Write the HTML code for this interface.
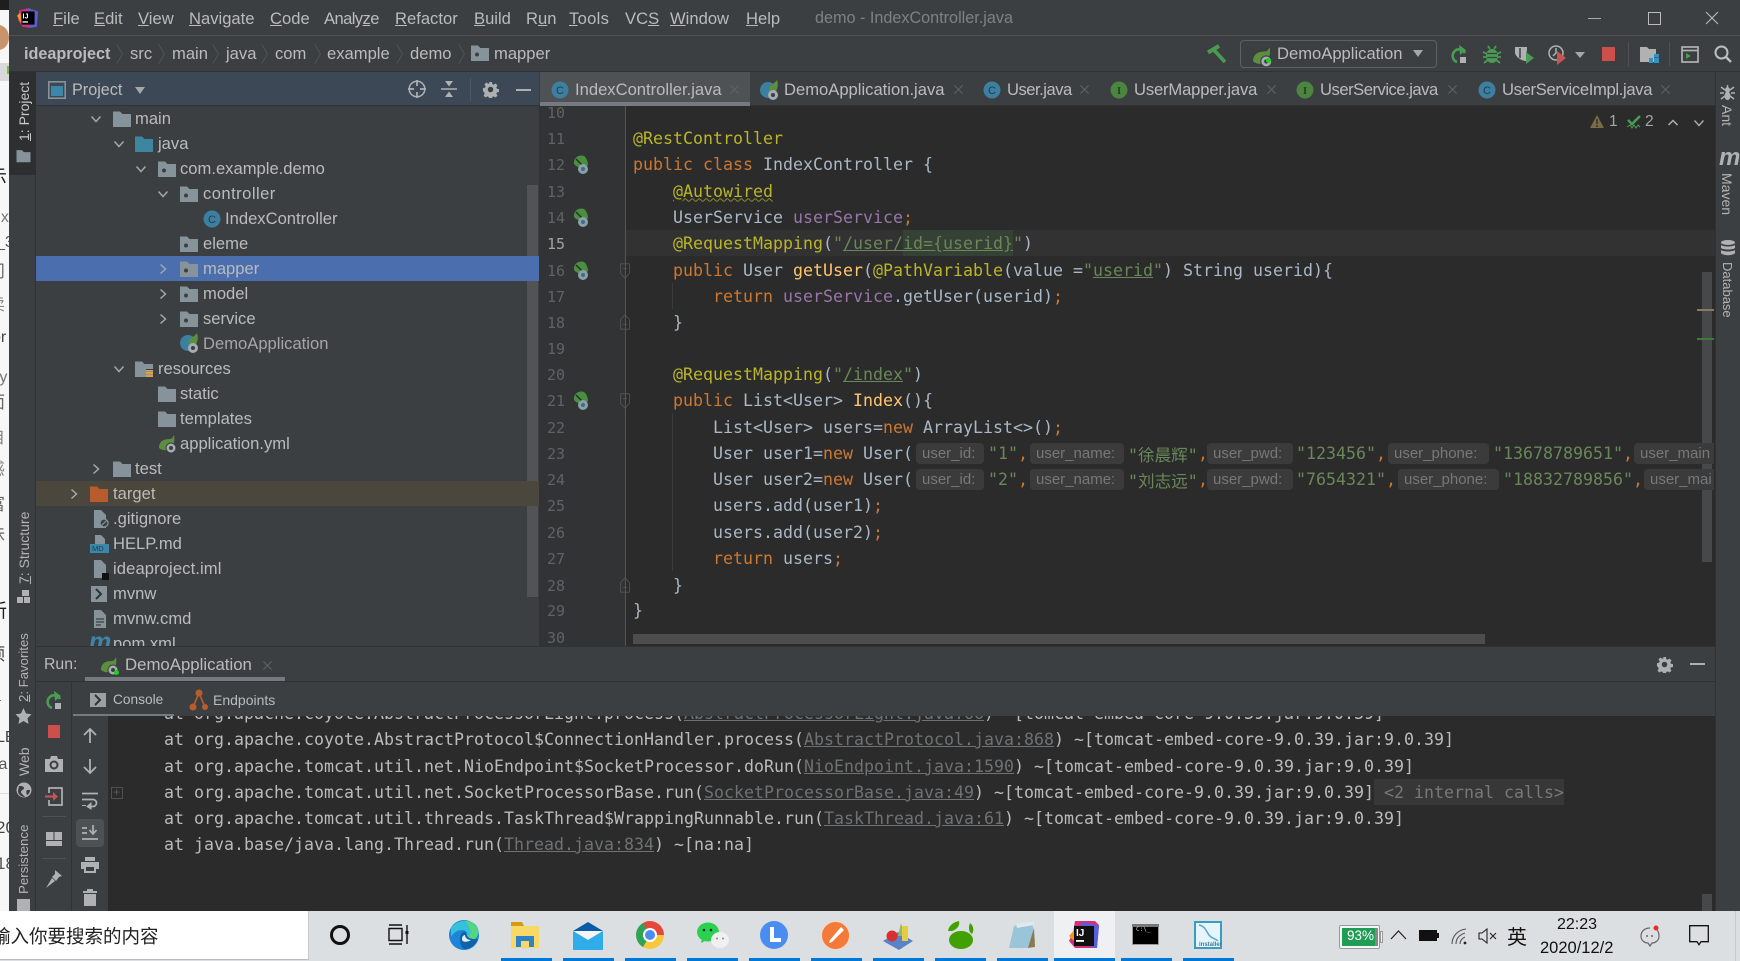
<!DOCTYPE html>
<html lang="en"><head><meta charset="utf-8"><title>demo - IndexController.java</title>
<style>
html,body{margin:0;padding:0;width:1740px;height:961px;overflow:hidden;background:#3c3f41}
body{position:relative;font-family:"Liberation Sans","Noto Sans CJK SC",sans-serif;color:#bbb;font-size:16.6px}
.b{position:absolute}
.t{position:absolute;white-space:pre;line-height:0}
.m{position:absolute;white-space:pre;line-height:0;font-family:"DejaVu Sans Mono","Noto Sans CJK SC",monospace;font-size:16.61px;color:#a9b7c6}
.n{position:absolute;white-space:pre;line-height:0;font-family:"DejaVu Sans Mono",monospace;font-size:15px;color:#606366;left:547px}
svg.i{position:absolute;overflow:visible}
.a{color:#bbb529}.k{color:#cc7832}.f{color:#9876aa}.y{color:#ffc66d}.s{color:#6a8759}
.u{text-decoration:underline}
.h{position:absolute;background:#3b3b3b;border-radius:4px;height:21px;margin-top:-1px}
.ht{position:absolute;white-space:pre;line-height:0;color:#787878;font-size:15px}
.v{position:absolute;white-space:pre;line-height:0;font-size:14px;color:#b4b4b4;transform-origin:0 0}
.l{color:#6f7173;text-decoration:underline}
.mi u{text-decoration:underline}
.tb{position:absolute;top:958px;height:3px;background:#0078d7}
.tree{color:#bbb}
.cjk{font-size:16.6px;font-family:"Noto Sans CJK SC",sans-serif}
</style></head><body>
<svg width="0" height="0" style="position:absolute"><defs>
<symbol id="fo" viewBox="0 0 18 18"><path d="M0 1.5h7l2.500 2.500H18v13H0z" fill="#87939a"/></symbol>
<symbol id="pk" viewBox="0 0 18 18"><path d="M0 1.500h7l2.500 2.500H18v13H0z" fill="#87939a"/><circle cx="6" cy="10.500" r="2" fill="#3c3f41"/></symbol>
<symbol id="bl" viewBox="0 0 18 18"><path d="M0 1.500h7l2.500 2.500H18v13H0z" fill="#3e86a0"/></symbol>
<symbol id="re" viewBox="0 0 18 18"><path d="M0 1.500h7l2.500 2.500H18v13H0z" fill="#87939a"/><path d="M11 9h7v2h-7zm0 3h7v2h-7zm0 3h7v2h-7z" fill="#d9a343"/><path d="M11 9h7v1h-7z" fill="#3c3f41"/></symbol>
<symbol id="cc" viewBox="0 0 18 18"><circle cx="9" cy="9" r="8.500" fill="#3c7f9f"/><text x="9" y="13" text-anchor="middle" font-size="11" font-family="Liberation Sans" fill="#1c3d4f">C</text></symbol>
<symbol id="ii" viewBox="0 0 18 18"><circle cx="9" cy="9" r="8.500" fill="#4b8540"/><text x="9" y="13" text-anchor="middle" font-size="10.500" font-weight="bold" font-family="Liberation Serif" fill="#233f1e">I</text></symbol>
<symbol id="sp" viewBox="0 0 20 20"><path d="M1 14C1 7 6 5 12 5c2 0 3-2 4-4 1 5 0 10-3 13-4 3-8 3-12 0z" fill="#5b8f3d"/><circle cx="13" cy="14" r="5.500" fill="#3c3f41"/><circle cx="13" cy="14" r="4.500" fill="#a5adb2"/><circle cx="13" cy="14" r="2" fill="#3c3f41"/></symbol>
<symbol id="dm" viewBox="0 0 20 20"><circle cx="8" cy="10" r="8" fill="#3c7f9f"/><path d="M9 8c1-3 5-4 8-8 2 6 0 12-4 14-3 0-5-2-4-6z" fill="#5b8f3d"/><circle cx="13" cy="15" r="5" fill="#a5adb2"/><circle cx="13" cy="15" r="2" fill="#3c3f41"/></symbol>
<symbol id="gu" viewBox="0 0 16 20"><path d="M1 9C0 3 6-1 11 1c3 2 4 7 4 9-3 3-10 4-14-1z" fill="#4a8f3f"/><path d="M3 4l9 9" stroke="#2b2b2b" stroke-width="1.500"/><circle cx="10" cy="14" r="5" fill="#8ca0aa"/><circle cx="10" cy="14" r="2" fill="#3c6e86"/></symbol>
<symbol id="fd" viewBox="0 0 12 20"><path d="M.5 1h11v12l-5.500 6-5.500-6z" fill="none" stroke="#565656"/><path d="M3.500 7h5" stroke="#565656"/></symbol>
<symbol id="fu" viewBox="0 0 12 20"><path d="M.5 19h11V7L6 1 .5 7z" fill="none" stroke="#565656"/><path d="M3.500 13h5" stroke="#565656"/></symbol>
<symbol id="ch" viewBox="0 0 12 12"><path d="M1.500 3.500L6 8.500l4.500-5" fill="none" stroke="#a5a7a9" stroke-width="1.500"/></symbol>
<symbol id="cr" viewBox="0 0 12 12"><path d="M3.500 1.500L8.500 6l-5 4.500" fill="none" stroke="#a5a7a9" stroke-width="1.500"/></symbol>
<symbol id="br" viewBox="0 0 10 26"><path d="M1 1l7 12-7 12" fill="none" stroke="#55585a" stroke-width="1"/></symbol>
<symbol id="x" viewBox="0 0 12 12"><path d="M1.500 1.500l9 9m0-9l-9 9" stroke="#5f6163" stroke-width="1.200"/></symbol>
<symbol id="gear" viewBox="0 0 16 16"><path d="M6.500 0h3l.4 2.300 1.500.7 2-1.300 2 2.100-1.300 2 .7 1.400 2.200.4v3l-2.200.400-.7 1.500 1.300 2-2 2-2-1.300-1.500.700-.4 2.200h-3l-.4-2.200-1.500-.700-2 1.300-2-2 1.300-2-.7-1.500L0 9.500v-3l2.200-.4.7-1.400-1.300-2 2-2.100 2 1.300 1.500-.7z" fill="#adb0b2" transform="scale(.89) translate(1 1)"/><circle cx="8" cy="8" r="2.600" fill="#3c3f41"/></symbol>
<symbol id="file" viewBox="0 0 14 20"><path d="M1 1h7l5 5v13H1z" fill="#87939a"/></symbol>
</defs></svg>

<!-- left desktop sliver -->
<div class="b" style="left:0;top:0;width:9px;height:911px;background:#f7f7f7;overflow:hidden">
<div class="b" style="left:0;top:0;width:9px;height:10px;background:#1e1e1e"></div>
<div class="b" style="left:-12px;top:25px;width:21px;height:25px;border-radius:50%;background:#c8946c"></div>
<div class="b" style="left:0;top:63px;width:9px;height:18px;background:#d9d9d9"></div>
<div class="b" style="left:7px;top:66px;width:2px;height:8px;background:#7dbb55"></div>
<div class="t" style="left:-12px;top:178px;color:#222;font-size:19px">示</div>
<div class="t" style="left:-8px;top:218px;color:#777;font-size:16px">ux</div>
<div class="t" style="left:-4px;top:243px;color:#555;font-size:16px">_3</div>
<div class="t" style="left:-12px;top:272px;color:#666;font-size:17px">问</div>
<div class="t" style="left:-12px;top:305px;color:#888;font-size:17px">卖</div>
<div class="t" style="left:-8px;top:338px;color:#444;font-size:16px">or</div>
<div class="t" style="left:-6px;top:378px;color:#777;font-size:16px">-y</div>
<div class="t" style="left:-12px;top:403px;color:#666;font-size:17px">面</div>
<div class="t" style="left:-12px;top:438px;color:#888;font-size:17px">自</div>
<div class="t" style="left:-12px;top:470px;color:#888;font-size:17px">感</div>
<div class="t" style="left:-12px;top:505px;color:#666;font-size:17px">富</div>
<div class="t" style="left:-12px;top:535px;color:#666;font-size:17px">味</div>
<div class="t" style="left:-12px;top:612px;color:#222;font-size:19px">新</div>
<div class="t" style="left:-12px;top:655px;color:#444;font-size:17px">顶</div>
<div class="t" style="left:-8px;top:697px;color:#444;font-size:16px">a</div>
<div class="t" style="left:-4px;top:738px;color:#444;font-size:16px">LE</div>
<div class="t" style="left:-6px;top:765px;color:#555;font-size:16px">ta</div>
<div class="b" style="left:0;top:793px;width:9px;height:1px;background:#ddd"></div>
<div class="t" style="left:-4px;top:828px;color:#444;font-size:17px">20</div>
<div class="t" style="left:-4px;top:864px;color:#555;font-size:17px">18</div>
</div>

<!-- title bar -->
<div class="b" style="left:9px;top:0;width:1731px;height:35px;background:#3c3f41"></div>
<div class="b" style="left:9px;top:35px;width:1731px;height:1px;background:#515151"></div>
<svg class="i" style="left:17px;top:7px" width="22" height="22" viewBox="0 0 20 20"><path d="M2 3l9-2 3 2 5 2-1 12-6 2-7-1-4-6z" fill="#d4317c"/><path d="M10 1l9 3-1 14-6 1z" fill="#5a5fd6"/><path d="M0 8l3-3 2 12z" fill="#f49725"/><rect x="4" y="4" width="12" height="12" fill="#000"/><text x="5" y="10.500" font-size="6.500" font-weight="bold" font-family="Liberation Sans" fill="#fff">IJ</text><rect x="5" y="13" width="5" height="1.200" fill="#fff"/></svg>
<div class="mi">
<div class="t" style="left:53px;top:19px"><u>F</u>ile</div>
<div class="t" style="left:94px;top:19px"><u>E</u>dit</div>
<div class="t" style="left:138px;top:19px"><u>V</u>iew</div>
<div class="t" style="left:189px;top:19px"><u>N</u>avigate</div>
<div class="t" style="left:270px;top:19px"><u>C</u>ode</div>
<div class="t" style="left:324px;top:19px;letter-spacing:-.6px">Analy<u>z</u>e</div>
<div class="t" style="left:395px;top:19px"><u>R</u>efactor</div>
<div class="t" style="left:474px;top:19px"><u>B</u>uild</div>
<div class="t" style="left:526px;top:19px">R<u>u</u>n</div>
<div class="t" style="left:569px;top:19px;letter-spacing:.3px"><u>T</u>ools</div>
<div class="t" style="left:625px;top:19px">VC<u>S</u></div>
<div class="t" style="left:670px;top:19px"><u>W</u>indow</div>
<div class="t" style="left:746px;top:19px"><u>H</u>elp</div>
</div>
<div class="t" style="left:815px;top:18px;color:#808080;font-size:16.2px">demo - IndexController.java</div>
<div class="b" style="left:1588px;top:18px;width:13px;height:1px;background:#aaa"></div>
<div class="b" style="left:1648px;top:12px;width:11px;height:11px;border:1px solid #bbb"></div>
<svg class="i" style="left:1705px;top:11px" width="14" height="14" viewBox="0 0 14 14"><path d="M1 1l12 12m0-12L1 13" stroke="#bbb" stroke-width="1.100"/></svg>

<!-- nav bar -->
<div class="b" style="left:9px;top:71px;width:1731px;height:1px;background:#323232"></div>
<div class="t" style="left:24px;top:54px;font-weight:bold;font-size:16.2px">ideaproject</div>
<svg class="i" style="left:116px;top:41px" width="8" height="26"><use href="#br"/></svg>
<div class="t" style="left:130px;top:54px">src</div>
<svg class="i" style="left:158px;top:41px" width="8" height="26"><use href="#br"/></svg>
<div class="t" style="left:172px;top:54px">main</div>
<svg class="i" style="left:212px;top:41px" width="8" height="26"><use href="#br"/></svg>
<div class="t" style="left:226px;top:54px">java</div>
<svg class="i" style="left:261px;top:41px" width="8" height="26"><use href="#br"/></svg>
<div class="t" style="left:275px;top:54px">com</div>
<svg class="i" style="left:314px;top:41px" width="8" height="26"><use href="#br"/></svg>
<div class="t" style="left:327px;top:54px">example</div>
<svg class="i" style="left:396px;top:41px" width="8" height="26"><use href="#br"/></svg>
<div class="t" style="left:410px;top:54px">demo</div>
<svg class="i" style="left:458px;top:41px" width="8" height="26"><use href="#br"/></svg>
<svg class="i" style="left:471px;top:44px" width="18" height="18"><use href="#pk"/></svg>
<div class="t" style="left:494px;top:54px">mapper</div>

<svg class="i" style="left:1206px;top:45px" width="22" height="19" viewBox="0 0 22 19"><path d="M2 7.500L13 1" fill="none" stroke="#4a9a52" stroke-width="4"/><path d="M8 5l11 12" fill="none" stroke="#4a9a52" stroke-width="3.600"/></svg>
<div class="b" style="left:1240px;top:40px;width:195px;height:26px;border:1px solid #5e6163;border-radius:4px"></div>
<svg class="i" style="left:1252px;top:46px" width="22" height="22"><use href="#sp"/></svg>
<div class="b" style="left:1266px;top:58px;width:5px;height:5px;border-radius:50%;background:#1bd41b"></div>
<div class="t" style="left:1277px;top:54px">DemoApplication</div>
<div class="b" style="left:1413px;top:50px;width:0;height:0;border-left:5.500px solid transparent;border-right:5.500px solid transparent;border-top:7px solid #a5a7a9"></div>
<svg class="i" style="left:1450px;top:45px" width="18" height="20" viewBox="0 0 18 20"><path d="M15 8A6.500 6.500 0 1 0 7 17" fill="none" stroke="#499c54" stroke-width="2.600"/><path d="M9 0l7 5-6 5z" fill="#499c54"/><rect x="10" y="12" width="6" height="6" fill="#afb1b3"/></svg>
<svg class="i" style="left:1483px;top:45px" width="18" height="20" viewBox="0 0 18 20"><ellipse cx="9" cy="11" rx="6" ry="7" fill="#499c54"/><path d="M0 7l4 2M18 7l-4 2M0 12h4M14 12h4M1 18l4-3M17 18l-4-3M5 1l2 3M13 1l-2 3" stroke="#499c54" stroke-width="1.800"/><path d="M4 8.500h10M4 12.500h10" stroke="#3c3f41" stroke-width="1.300"/></svg>
<svg class="i" style="left:1514px;top:45px" width="21" height="20" viewBox="0 0 21 20"><path d="M1 2h12v2l-1 12c-3 0-10-3-11-8z" fill="#afb1b3"/><path d="M6 3v10" stroke="#3c3f41" stroke-width="1.500"/><path d="M12 7l8 6-8 6z" fill="#499c54"/></svg>
<svg class="i" style="left:1548px;top:45px" width="20" height="20" viewBox="0 0 20 20"><circle cx="8" cy="8" r="7" fill="none" stroke="#afb1b3" stroke-width="1.500"/><path d="M8 3v5l-3 3" fill="none" stroke="#afb1b3" stroke-width="1.500"/><path d="M9 6l9 7-9 7z" fill="#c75450"/></svg>
<div class="b" style="left:1575px;top:52px;width:0;height:0;border-left:5px solid transparent;border-right:5px solid transparent;border-top:6px solid #a5a7a9"></div>
<div class="b" style="left:1602px;top:47px;width:13px;height:14px;background:#cd4f4c"></div>
<div class="b" style="left:1628px;top:42px;width:1px;height:24px;background:#515151"></div>
<svg class="i" style="left:1640px;top:46px" width="20" height="18" viewBox="0 0 20 18"><path d="M0 1h7l2 2h7v13H0z" fill="#afb1b3"/><rect x="14" y="8" width="4" height="4" fill="#3c3f41"/><rect x="9" y="12" width="4" height="5" fill="#3592c4"/><rect x="14" y="12" width="5" height="5" fill="#3592c4"/><rect x="14" y="8" width="5" height="3.500" fill="#3592c4"/></svg>
<div class="b" style="left:1669px;top:42px;width:1px;height:24px;background:#515151"></div>
<svg class="i" style="left:1681px;top:46px" width="18" height="17" viewBox="0 0 18 17"><rect x="1" y="1" width="16" height="15" fill="none" stroke="#afb1b3" stroke-width="1.700"/><path d="M1 4.500h16" stroke="#afb1b3" stroke-width="1.700"/><path d="M5 7l5 3-5 3z" fill="#499c54"/></svg>
<svg class="i" style="left:1714px;top:45px" width="18" height="18" viewBox="0 0 18 18"><circle cx="7.500" cy="7.500" r="6" fill="none" stroke="#bcbfc1" stroke-width="2"/><path d="M12 12l5 5" stroke="#bcbfc1" stroke-width="2.400"/></svg>

<!-- left tool strip -->
<div class="b" style="left:9px;top:72px;width:27px;height:839px;background:#3c3f41;border-right:1px solid #323232;box-sizing:border-box"></div>
<div class="b" style="left:9px;top:72px;width:27px;height:103px;background:#2e2f31"></div>
<div class="v" style="left:24px;top:141px;transform:rotate(-90deg);color:#c8c8c8"><u>1</u>: Project</div>
<svg class="i" style="left:16px;top:149px" width="15" height="14" viewBox="0 0 18 17"><use href="#fo" fill="#afb1b3"/></svg>
<div class="v" style="left:24px;top:584px;transform:rotate(-90deg)"><u>7</u>: Structure</div>
<svg class="i" style="left:17px;top:590px" width="13" height="13" viewBox="0 0 13 13"><rect x="5" y="0" width="7" height="6" fill="#afb1b3"/><rect x="0" y="7" width="6" height="6" fill="#afb1b3"/><rect x="7" y="7" width="6" height="6" fill="#afb1b3"/></svg>
<div class="v" style="left:24px;top:702px;transform:rotate(-90deg);font-size:13.200px"><u>2</u>: Favorites</div>
<svg class="i" style="left:15px;top:708px" width="17" height="16" viewBox="0 0 17 16"><path d="M8.500 0l2.500 5.500 5.500.7-4 4 1 5.800-5-3-5 3 1-5.800-4-4 5.500-.7z" fill="#afb1b3"/></svg>
<div class="v" style="left:24px;top:776px;transform:rotate(-90deg)">Web</div>
<svg class="i" style="left:16px;top:782px" width="16" height="16" viewBox="0 0 16 16"><circle cx="8" cy="8" r="7.500" fill="#afb1b3"/><path d="M3 4c2 0 5 0 5 2S5 8 5 10s3 3 4 5c-4 0-7-3-7-6zM11 8h3c0 2-1 4-3 5-1-2-1-4 0-5z" fill="#3c3f41"/></svg>
<div class="v" style="left:24px;top:894px;transform:rotate(-90deg);font-size:13.300px">Persistence</div>
<div class="b" style="left:17px;top:899px;width:13px;height:12px;background:#afb1b3"></div>

<!-- Project panel -->
<div class="b" style="left:36px;top:72px;width:503px;height:34px;background:#3c4856;border-bottom:1px solid #323232;box-sizing:border-box"></div>
<svg class="i" style="left:48px;top:81px" width="18" height="18" viewBox="0 0 18 18"><rect x=".8" y=".8" width="16.400" height="16.400" fill="none" stroke="#87939a" stroke-width="1.600"/><rect x="3" y="5" width="12" height="10" fill="#3e86a8"/></svg>
<div class="t" style="left:72px;top:90px;font-size:16.2px">Project</div>
<div class="b" style="left:135px;top:87px;width:0;height:0;border-left:5.500px solid transparent;border-right:5.500px solid transparent;border-top:7px solid #a5a7a9"></div>
<svg class="i" style="left:408px;top:80px" width="18" height="18" viewBox="0 0 18 18"><circle cx="9" cy="9" r="7.800" fill="none" stroke="#afb1b3" stroke-width="1.500"/><path d="M9 0v6M9 12v6M0 9h6M12 9h6" stroke="#afb1b3" stroke-width="1.700"/></svg>
<svg class="i" style="left:441px;top:80px" width="16" height="18" viewBox="0 0 16 18"><path d="M0 9h16" stroke="#afb1b3" stroke-width="1.500"/><path d="M4 1h8L8 6.500zM4 17h8L8 11.500z" fill="#afb1b3"/></svg>
<div class="b" style="left:470px;top:78px;width:1px;height:23px;background:#4c5865"></div>
<svg class="i" style="left:482px;top:81px" width="17" height="17"><use href="#gear"/></svg>
<div class="b" style="left:516px;top:89px;width:15px;height:2px;background:#adb0b2"></div>

<div class="b" style="left:527px;top:185px;width:11px;height:412px;background:#515355"></div>
<div class="b" style="left:36px;top:256px;width:503px;height:25px;background:#4b6eaf"></div>
<div class="b" style="left:36px;top:481px;width:503px;height:25px;background:#4c473c"></div>

<div class="b tree" style="left:36px;top:106px;width:503px;height:540px;overflow:hidden">
<!-- coordinates inside: x-36, y-106 -->
<svg class="i" style="left:54px;top:7px" width="12" height="12"><use href="#ch"/></svg>
<svg class="i" style="left:77px;top:32px" width="12" height="12"><use href="#ch"/></svg>
<svg class="i" style="left:99px;top:57px" width="12" height="12"><use href="#ch"/></svg>
<svg class="i" style="left:121px;top:82px" width="12" height="12"><use href="#ch"/></svg>
<svg class="i" style="left:121px;top:157px" width="12" height="12"><use href="#cr"/></svg>
<svg class="i" style="left:121px;top:182px" width="12" height="12"><use href="#cr"/></svg>
<svg class="i" style="left:121px;top:207px" width="12" height="12"><use href="#cr"/></svg>
<svg class="i" style="left:77px;top:257px" width="12" height="12"><use href="#ch"/></svg>
<svg class="i" style="left:54px;top:357px" width="12" height="12"><use href="#cr"/></svg>
<svg class="i" style="left:32px;top:382px" width="12" height="12"><use href="#cr"/></svg>

<svg class="i" style="left:77px;top:4px" width="18" height="18"><use href="#fo"/></svg><div class="t" style="left:99px;top:13px">main</div>
<svg class="i" style="left:99px;top:29px" width="18" height="18"><use href="#bl"/></svg><div class="t" style="left:122px;top:38px">java</div>
<svg class="i" style="left:122px;top:54px" width="18" height="18"><use href="#pk"/></svg><div class="t" style="left:144px;top:63px">com.example.demo</div>
<svg class="i" style="left:144px;top:79px" width="18" height="18"><use href="#pk"/></svg><div class="t" style="left:167px;top:88px;letter-spacing:.45px">controller</div>
<svg class="i" style="left:167px;top:104px" width="18" height="18"><use href="#cc"/></svg><div class="t" style="left:189px;top:113px">IndexController</div>
<svg class="i" style="left:144px;top:129px" width="18" height="18"><use href="#pk"/></svg><div class="t" style="left:167px;top:138px">eleme</div>
<svg class="i" style="left:144px;top:154px" width="18" height="18"><use href="#pk"/></svg><div class="t" style="left:167px;top:163px">mapper</div>
<svg class="i" style="left:144px;top:179px" width="18" height="18"><use href="#pk"/></svg><div class="t" style="left:167px;top:188px">model</div>
<svg class="i" style="left:144px;top:204px" width="18" height="18"><use href="#pk"/></svg><div class="t" style="left:167px;top:213px">service</div>
<svg class="i" style="left:144px;top:227px" width="20" height="20"><use href="#dm"/></svg><div class="t" style="left:167px;top:238px;color:#a4a6a8">DemoApplication</div>
<svg class="i" style="left:99px;top:254px" width="18" height="18"><use href="#re"/></svg><div class="t" style="left:122px;top:263px">resources</div>
<svg class="i" style="left:122px;top:279px" width="18" height="18"><use href="#fo"/></svg><div class="t" style="left:144px;top:288px">static</div>
<svg class="i" style="left:122px;top:304px" width="18" height="18"><use href="#fo"/></svg><div class="t" style="left:144px;top:313px">templates</div>
<svg class="i" style="left:122px;top:328px" width="20" height="20"><use href="#sp"/></svg><div class="t" style="left:144px;top:338px">application.yml</div>
<svg class="i" style="left:77px;top:354px" width="18" height="18"><use href="#fo"/></svg><div class="t" style="left:99px;top:363px">test</div>
<svg class="i" style="left:54px;top:379px" width="18" height="18" viewBox="0 0 18 18"><path d="M0 1.500h7l2.500 2.500H18v13H0z" fill="#b85c2e"/></svg><div class="t" style="left:77px;top:388px">target</div>
<svg class="i" style="left:57px;top:403px" width="14" height="20"><use href="#file"/><circle cx="11" cy="14" r="4" fill="#3c3f41" stroke="#87939a" stroke-width="1.300"/><path d="M8.500 16.500l5-5" stroke="#87939a" stroke-width="1.200"/></svg><div class="t" style="left:77px;top:413px">.gitignore</div>
<svg class="i" style="left:54px;top:429px" width="19" height="18" viewBox="0 0 19 18"><path d="M5 0h6l4 4v6H5z" fill="#87939a"/><rect x="0" y="9" width="19" height="9" fill="#3e86a8"/><text x="2" y="16" font-size="7.500" font-family="Liberation Sans" fill="#1c3d4f">MD</text></svg><div class="t" style="left:77px;top:438px">HELP.md</div>
<svg class="i" style="left:57px;top:453px" width="14" height="20"><use href="#file"/></svg><div class="b" style="left:66px;top:467px;width:7px;height:7px;background:#111"></div><div class="t" style="left:77px;top:463px;letter-spacing:.1px">ideaproject.iml</div>
<svg class="i" style="left:55px;top:480px" width="16" height="16" viewBox="0 0 16 16"><rect width="16" height="16" fill="#87939a"/><path d="M5 3l5 5-5 5" fill="none" stroke="#2f3335" stroke-width="2"/></svg><div class="t" style="left:77px;top:488px">mvnw</div>
<svg class="i" style="left:57px;top:503px" width="14" height="20" viewBox="0 0 14 20"><path d="M1 1h7l5 5v13H1z" fill="#87939a"/><path d="M3 10h8M3 13h8M3 16h5" stroke="#3c3f41" stroke-width="1.200"/></svg><div class="t" style="left:77px;top:513px">mvnw.cmd</div>
<div class="t" style="left:53px;top:536px;font:italic bold 25px/0 'Liberation Sans';color:#3e86a8">m</div><div class="t" style="left:77px;top:538px">pom.xml</div>
</div>

<!-- Editor tabs -->
<div class="b" style="left:539px;top:72px;width:1176px;height:34px;background:#3c3f41;border-bottom:1px solid #323232;box-sizing:border-box"></div>
<div class="b" style="left:540px;top:72px;width:210px;height:34px;background:#4e5254"></div>
<div class="b" style="left:540px;top:102px;width:210px;height:4px;background:#747a80"></div>
<svg class="i" style="left:551px;top:81px" width="18" height="18"><use href="#cc"/></svg>
<div class="t" style="left:575px;top:90px">IndexController.java</div>
<svg class="i" style="left:729px;top:84px" width="11" height="11"><use href="#x"/></svg>
<svg class="i" style="left:760px;top:80px" width="20" height="20"><use href="#dm"/></svg>
<div class="t" style="left:784px;top:90px">DemoApplication.java</div>
<svg class="i" style="left:953px;top:84px" width="11" height="11"><use href="#x"/></svg>
<svg class="i" style="left:983px;top:81px" width="18" height="18"><use href="#cc"/></svg>
<div class="t" style="left:1007px;top:90px;letter-spacing:-.49px">User.java</div>
<svg class="i" style="left:1079px;top:84px" width="11" height="11"><use href="#x"/></svg>
<svg class="i" style="left:1110px;top:81px" width="18" height="18"><use href="#ii"/></svg>
<div class="t" style="left:1134px;top:90px;letter-spacing:-.15px">UserMapper.java</div>
<svg class="i" style="left:1266px;top:84px" width="11" height="11"><use href="#x"/></svg>
<svg class="i" style="left:1296px;top:81px" width="18" height="18"><use href="#ii"/></svg>
<div class="t" style="left:1320px;top:90px;letter-spacing:-.48px">UserService.java</div>
<svg class="i" style="left:1447px;top:84px" width="11" height="11"><use href="#x"/></svg>
<svg class="i" style="left:1478px;top:81px" width="18" height="18"><use href="#cc"/></svg>
<div class="t" style="left:1502px;top:90px;letter-spacing:-.33px">UserServiceImpl.java</div>
<svg class="i" style="left:1660px;top:84px" width="11" height="11"><use href="#x"/></svg>

<!-- Right strip -->
<div class="b" style="left:1715px;top:72px;width:25px;height:839px;background:#3c3f41;border-left:1px solid #323232;box-sizing:border-box"></div>
<svg class="i" style="left:1720px;top:84px" width="15" height="17" viewBox="0 0 15 17"><path d="M7.500 1v15M1 3l4 3M14 3l-4 3M0 9h4M11 9h4M1 15l4-3M14 15l-4-3" stroke="#afb1b3" stroke-width="1.500"/><ellipse cx="7.500" cy="6" rx="2.500" ry="3" fill="#afb1b3"/><ellipse cx="7.500" cy="12" rx="3" ry="4" fill="#afb1b3"/></svg>
<div class="v" style="left:1727px;top:105px;transform:rotate(90deg)">Ant</div>
<div class="t" style="left:1719px;top:158px;font:italic bold 24px/0 'Liberation Sans';color:#afb1b3">m</div>
<div class="v" style="left:1727px;top:173px;transform:rotate(90deg)">Maven</div>
<svg class="i" style="left:1721px;top:240px" width="14" height="16" viewBox="0 0 14 16"><ellipse cx="7" cy="2.500" rx="7" ry="2.500" fill="#afb1b3"/><path d="M0 5c2 2 12 2 14 0v3c-2 2-12 2-14 0zM0 10c2 2 12 2 14 0v3c-2 3-12 3-14 0z" fill="#afb1b3"/></svg>
<div class="v" style="left:1727px;top:262px;transform:rotate(90deg);font-size:13px">Database</div>

<!-- Editor -->
<div class="b" style="left:539px;top:106px;width:86px;height:540px;background:#313335"></div>
<div class="b" style="left:625px;top:106px;width:1090px;height:540px;background:#2b2b2b"></div>
<div class="b" style="left:625px;top:230px;width:1090px;height:26px;background:#323232"></div>
<div class="b" style="left:625px;top:106px;width:1px;height:540px;background:#555"></div>
<div class="b" style="left:672px;top:283px;width:1px;height:26px;background:#3b3b3b"></div>
<div class="b" style="left:672px;top:413px;width:1px;height:158px;background:#3b3b3b"></div>
<div class="b" style="left:1702px;top:272px;width:10px;height:290px;background:#474849"></div>
<div class="b" style="left:1697px;top:309px;width:17px;height:2px;background:#877c5f"></div>
<div class="b" style="left:1697px;top:338px;width:17px;height:2px;background:#3d7a3d"></div>

<div class="b" style="left:0;top:106px;width:1714px;height:540px;overflow:hidden">
<div style="position:absolute;left:0;top:-105px">
<div class="n" style="top:112px">10</div><div class="n" style="top:138px">11</div><div class="n" style="top:164px">12</div><div class="n" style="top:190.500px">13</div><div class="n" style="top:217px">14</div><div class="n" style="top:243px;color:#a4a3a3">15</div><div class="n" style="top:269.500px">16</div><div class="n" style="top:295.500px">17</div><div class="n" style="top:322px">18</div><div class="n" style="top:348px">19</div><div class="n" style="top:374px">20</div><div class="n" style="top:400px">21</div><div class="n" style="top:427px">22</div><div class="n" style="top:453px">23</div><div class="n" style="top:479px">24</div><div class="n" style="top:505px">25</div><div class="n" style="top:532px">26</div><div class="n" style="top:558px">27</div><div class="n" style="top:585px">28</div><div class="n" style="top:610px">29</div><div class="n" style="top:637px">30</div>

<div class="m" style="left:633px;top:138px"><span class="a">@RestController</span></div>
<div class="m" style="left:633px;top:164px"><span class="k">public class</span> IndexController {</div>
<div class="m" style="left:673px;top:190.500px"><span class="a" style="text-decoration:underline wavy #8d8a2a 1px">@Autowired</span></div>
<div class="m" style="left:673px;top:217px">UserService <span class="f">userService</span><span class="k">;</span></div>
<div class="b" style="left:903px;top:229px;width:110px;height:26px;background:#344134"></div>
<div class="m" style="left:673px;top:243px"><span class="a">@RequestMapping</span>(<span class="s">"<span class="u">/user/id={userid}</span>"</span>)</div>
<div class="m" style="left:673px;top:269.500px"><span class="k">public</span> User <span class="y">getUser</span>(<span class="a">@PathVariable</span>(value =<span class="s">"<span class="u">userid</span>"</span>) String userid){</div>
<div class="m" style="left:713px;top:295.500px"><span class="k">return</span> <span class="f">userService</span>.getUser(userid)<span class="k">;</span></div>
<div class="m" style="left:673px;top:322px">}</div>
<div class="m" style="left:673px;top:374px"><span class="a">@RequestMapping</span>(<span class="s">"<span class="u">/index</span>"</span>)</div>
<div class="m" style="left:673px;top:400px"><span class="k">public</span> List&lt;User&gt; <span class="y">Index</span>(){</div>
<div class="m" style="left:713px;top:427px">List&lt;User&gt; users=<span class="k">new</span> ArrayList&lt;&gt;()<span class="k">;</span></div>

<div class="m" style="left:713px;top:453px">User user1=<span class="k">new</span> User(</div>
<div class="h" style="left:916px;top:443px;width:68px"></div><div class="ht" style="left:922px;top:453px">user_id:</div>
<div class="m s" style="left:988px;top:453px;color:#6a8759">"1"<span class="k">,</span></div>
<div class="h" style="left:1030px;top:443px;width:94px"></div><div class="ht" style="left:1036px;top:453px">user_name:</div>
<div class="m" style="left:1128px;top:453px;color:#6a8759">"<span class="cjk">徐晨辉</span>"</div><div class="m k" style="left:1198px;top:453px">,</div>
<div class="h" style="left:1207px;top:443px;width:86px"></div><div class="ht" style="left:1213px;top:453px">user_pwd:</div>
<div class="m" style="left:1296px;top:453px;color:#6a8759">"123456"<span class="k">,</span></div>
<div class="h" style="left:1388px;top:443px;width:101px"></div><div class="ht" style="left:1394px;top:453px">user_phone:</div>
<div class="m" style="left:1493px;top:453px;color:#6a8759">"13678789651"<span class="k">,</span></div>
<div class="h" style="left:1634px;top:443px;width:90px"></div><div class="ht" style="left:1640px;top:453px">user_main</div>

<div class="m" style="left:713px;top:479px">User user2=<span class="k">new</span> User(</div>
<div class="h" style="left:916px;top:469px;width:68px"></div><div class="ht" style="left:922px;top:479px">user_id:</div>
<div class="m" style="left:988px;top:479px;color:#6a8759">"2"<span class="k">,</span></div>
<div class="h" style="left:1030px;top:469px;width:94px"></div><div class="ht" style="left:1036px;top:479px">user_name:</div>
<div class="m" style="left:1128px;top:479px;color:#6a8759">"<span class="cjk">刘志远</span>"</div><div class="m k" style="left:1198px;top:479px">,</div>
<div class="h" style="left:1207px;top:469px;width:86px"></div><div class="ht" style="left:1213px;top:479px">user_pwd:</div>
<div class="m" style="left:1296px;top:479px;color:#6a8759">"7654321"<span class="k">,</span></div>
<div class="h" style="left:1398px;top:469px;width:101px"></div><div class="ht" style="left:1404px;top:479px">user_phone:</div>
<div class="m" style="left:1503px;top:479px;color:#6a8759">"18832789856"<span class="k">,</span></div>
<div class="h" style="left:1644px;top:469px;width:90px"></div><div class="ht" style="left:1650px;top:479px">user_mai</div>

<div class="m" style="left:713px;top:505px">users.add(user1)<span class="k">;</span></div>
<div class="m" style="left:713px;top:532px">users.add(user2)<span class="k">;</span></div>
<div class="m" style="left:713px;top:558px"><span class="k">return</span> users<span class="k">;</span></div>
<div class="m" style="left:673px;top:585px">}</div>
<div class="m" style="left:633px;top:610px">}</div>
</div></div>

<svg class="i" style="left:573px;top:155px" width="16" height="20"><use href="#gu"/></svg>
<svg class="i" style="left:573px;top:208px" width="16" height="20"><use href="#gu"/></svg>
<svg class="i" style="left:573px;top:261px" width="16" height="20"><use href="#gu"/></svg>
<svg class="i" style="left:573px;top:391px" width="16" height="20"><use href="#gu"/></svg>
<svg class="i" style="left:619px;top:263px" width="12" height="16"><use href="#fd"/></svg>
<svg class="i" style="left:619px;top:314px" width="12" height="16"><use href="#fu"/></svg>
<svg class="i" style="left:619px;top:393px" width="12" height="16"><use href="#fd"/></svg>
<svg class="i" style="left:619px;top:577px" width="12" height="16"><use href="#fu"/></svg>

<div class="b" style="left:633px;top:634px;width:852px;height:10px;background:#4d4d4d"></div>

<svg class="i" style="left:1590px;top:115px" width="14" height="13" viewBox="0 0 14 13"><path d="M7 0l7 13H0z" fill="#7a6a48"/><path d="M7 4v5M7 10v2" stroke="#2b2b2b" stroke-width="1.300"/></svg>
<div class="t" style="left:1609px;top:122px;font-size:15.500px;color:#a4a6a8">1</div>
<svg class="i" style="left:1627px;top:115px" width="15" height="15" viewBox="0 0 15 15"><path d="M1 5l4 4 8-8" fill="none" stroke="#499c54" stroke-width="2.500"/><path d="M0 12l3-2 2 3 2-3 2 3 2-3 2 2" fill="none" stroke="#499c54"/></svg>
<div class="t" style="left:1645px;top:122px;font-size:15.500px;color:#a4a6a8">2</div>
<svg class="i" style="left:1667px;top:117px" width="12" height="12"><path d="M1.500 8L6 3.500 10.500 8" fill="none" stroke="#afb1b3" stroke-width="1.500"/></svg>
<svg class="i" style="left:1693px;top:117px" width="12" height="12"><use href="#ch"/></svg>

<!-- Run panel -->
<div class="b" style="left:36px;top:646px;width:1679px;height:1px;background:#323232"></div>
<div class="b" style="left:36px;top:647px;width:1679px;height:34px;background:#3c3f41"></div>
<div class="t" style="left:44px;top:665px;font-size:15.800px">Run:</div>
<svg class="i" style="left:100px;top:656px" width="20" height="20"><use href="#sp"/></svg>
<div class="b" style="left:114px;top:670px;width:5px;height:5px;border-radius:50%;background:#1bd41b"></div>
<div class="t" style="left:125px;top:665px;font-size:16.800px">DemoApplication</div>
<svg class="i" style="left:262px;top:660px" width="11" height="11"><use href="#x"/></svg>
<div class="b" style="left:85px;top:677px;width:200px;height:4px;background:#747a80"></div>
<svg class="i" style="left:1656px;top:656px" width="17" height="17"><use href="#gear"/></svg>
<div class="b" style="left:1690px;top:663px;width:15px;height:2px;background:#adb0b2"></div>
<div class="b" style="left:36px;top:681px;width:1679px;height:1px;background:#323232"></div>

<div class="b" style="left:36px;top:682px;width:1679px;height:34px;background:#3c3f41"></div>
<div class="b" style="left:36px;top:716px;width:72px;height:195px;background:#3c3f41"></div>
<div class="b" style="left:71px;top:682px;width:1px;height:229px;background:#323232"></div>
<div class="b" style="left:90px;top:693px;width:16px;height:14px;background:#9aa0a3"></div>
<svg class="i" style="left:90px;top:692px" width="16" height="16"><path d="M5 3l5 5-5 5" fill="none" stroke="#2f3335" stroke-width="2"/></svg>
<div class="t" style="left:113px;top:700px;font-size:13.700px">Console</div>
<svg class="i" style="left:189px;top:689px" width="19" height="22" viewBox="0 0 19 22"><circle cx="10" cy="4" r="3.500" fill="#b85c2e"/><circle cx="4" cy="18" r="3.500" fill="#b85c2e"/><circle cx="16" cy="18" r="3" fill="#b85c2e"/><path d="M10 4L4 18M10 4l6 14" stroke="#b85c2e" stroke-width="1.600"/></svg>
<div class="t" style="left:213px;top:700px;font-size:14px">Endpoints</div>
<div class="b" style="left:73px;top:714px;width:101px;height:2px;background:#747a80"></div>

<!-- console -->
<div class="b" style="left:108px;top:716px;width:1607px;height:195px;background:#2b2b2b;overflow:hidden">
<div style="position:absolute;left:-108px;top:-715px;color:#bbb">
<div class="m" style="left:164px;top:713px;color:#bbb">at org.apache.coyote.AbstractProcessorLight.process(<span class="l">AbstractProcessorLight.java:66</span>) ~[tomcat-embed-core-9.0.39.jar:9.0.39]</div>
<div class="m" style="left:164px;top:739px;color:#bbb">at org.apache.coyote.AbstractProtocol$ConnectionHandler.process(<span class="l">AbstractProtocol.java:868</span>) ~[tomcat-embed-core-9.0.39.jar:9.0.39]</div>
<div class="m" style="left:164px;top:765.500px;color:#bbb">at org.apache.tomcat.util.net.NioEndpoint$SocketProcessor.doRun(<span class="l">NioEndpoint.java:1590</span>) ~[tomcat-embed-core-9.0.39.jar:9.0.39]</div>
<div class="b" style="left:1374px;top:778px;width:190px;height:26px;background:#373737"></div>
<div class="m" style="left:164px;top:792px;color:#bbb">at org.apache.tomcat.util.net.SocketProcessorBase.run(<span class="l">SocketProcessorBase.java:49</span>) ~[tomcat-embed-core-9.0.39.jar:9.0.39]</div>
<div class="m" style="left:1384px;top:792px;color:#787878">&lt;2 internal calls&gt;</div>
<div class="m" style="left:164px;top:818px;color:#bbb">at org.apache.tomcat.util.threads.TaskThread$WrappingRunnable.run(<span class="l">TaskThread.java:61</span>) ~[tomcat-embed-core-9.0.39.jar:9.0.39]</div>
<div class="m" style="left:164px;top:844px;color:#bbb">at java.base/java.lang.Thread.run(<span class="l">Thread.java:834</span>) ~[na:na]</div>
<div class="b" style="left:111px;top:786px;width:10px;height:10px;border:1px solid #4f4f4f"></div>
<div class="t" style="left:113px;top:791px;color:#5a5a5a;font-size:12px">+</div>
<div class="b" style="left:1702px;top:893px;width:10px;height:20px;background:#474849"></div>
</div></div>

<!-- run toolbar col 1 -->
<svg class="i" style="left:45px;top:691px" width="18" height="20" viewBox="0 0 18 20"><path d="M15 8A6.500 6.500 0 1 0 7 17" fill="none" stroke="#499c54" stroke-width="2.600"/><path d="M9 0l7 5-6 5z" fill="#499c54"/><rect x="10" y="12" width="6" height="6" fill="#afb1b3"/></svg>
<div class="b" style="left:48px;top:725px;width:12px;height:13px;background:#cd4f4c"></div>
<svg class="i" style="left:45px;top:756px" width="18" height="16" viewBox="0 0 18 16"><path d="M0 3h5l1-3h6l1 3h5v13H0z" fill="#afb1b3"/><circle cx="9" cy="9" r="3.500" fill="none" stroke="#3c3f41" stroke-width="2"/></svg>
<svg class="i" style="left:45px;top:787px" width="18" height="19" viewBox="0 0 18 19"><path d="M4 6V1h13v17H4v-5" fill="none" stroke="#afb1b3" stroke-width="1.700"/><path d="M0 9.500h10" stroke="#c75450" stroke-width="2.200"/><path d="M8 5l5 4.500-5 4.500z" fill="#c75450"/></svg>
<div class="b" style="left:42px;top:816px;width:24px;height:1px;background:#515151"></div>
<svg class="i" style="left:46px;top:832px" width="16" height="14" viewBox="0 0 16 14"><rect width="7.500" height="8" fill="#afb1b3"/><rect x="8.500" width="7.500" height="8" fill="#afb1b3"/><rect y="9" width="16" height="5" fill="#afb1b3"/></svg>
<div class="b" style="left:42px;top:858px;width:24px;height:1px;background:#515151"></div>
<svg class="i" style="left:45px;top:870px" width="18" height="18" viewBox="0 0 18 18"><path d="M10 0l7 6-3 1-3 4-4-4 3-3zM7 8l3 3-9 7z" fill="#afb1b3"/></svg>
<!-- col 2 -->
<svg class="i" style="left:83px;top:727px" width="14" height="16" viewBox="0 0 14 16"><path d="M7 16V2M1 8l6-6 6 6" fill="none" stroke="#afb1b3" stroke-width="1.800"/></svg>
<svg class="i" style="left:83px;top:759px" width="14" height="16" viewBox="0 0 14 16"><path d="M7 0v14M1 8l6 6 6-6" fill="none" stroke="#afb1b3" stroke-width="1.800"/></svg>
<svg class="i" style="left:82px;top:792px" width="16" height="17" viewBox="0 0 16 17"><path d="M0 1.500h16M0 7.500h11a3 3 0 0 1 0 7H7" fill="none" stroke="#afb1b3" stroke-width="1.700"/><path d="M9 11l-4 3.500 4 2.500zM0 13.500h4" fill="#afb1b3" stroke="#afb1b3"/></svg>
<div class="b" style="left:76px;top:819px;width:28px;height:28px;background:#4d5153;border-radius:4px"></div>
<svg class="i" style="left:82px;top:825px" width="16" height="16" viewBox="0 0 16 16"><path d="M11 0v8M7.500 5l3.500 4 3.500-4M0 3h5M0 8h5M0 14h16" fill="none" stroke="#afb1b3" stroke-width="1.700"/></svg>
<svg class="i" style="left:81px;top:857px" width="18" height="16" viewBox="0 0 18 16"><path d="M4 0h10v4H4zM0 5h18v7h-3v4H3v-4H0z" fill="#afb1b3"/><rect x="5" y="10" width="8" height="4" fill="#3c3f41"/></svg>
<svg class="i" style="left:83px;top:889px" width="14" height="17" viewBox="0 0 14 17"><path d="M4 0h6v2h4v2H0V2h4zM1 5h12v12H1z" fill="#afb1b3"/></svg>

<!-- Taskbar -->
<div class="b" style="left:0;top:911px;width:1740px;height:50px;background:#dcdfe1"></div>
<div class="b" style="left:0;top:911px;width:309px;height:49px;background:#fff;border-right:1px solid #c8c8c8;border-bottom:1px solid #bbb;box-sizing:border-box;overflow:hidden">
<div class="t" style="left:-8px;top:25px;font-size:18.500px;color:#222;font-family:'Noto Sans CJK SC',sans-serif">输入你要搜索的内容</div>
</div>
<div class="b" style="left:1054px;top:911px;width:61px;height:50px;background:#eff0f1"></div>
<svg class="i" style="left:329px;top:924px" width="22" height="22"><circle cx="11" cy="11" r="8.500" fill="none" stroke="#111" stroke-width="3"/></svg>
<svg class="i" style="left:389px;top:925px" width="22" height="20" viewBox="0 0 22 20"><path d="M0 0h13M0 3.500h13v12H0zM0 19h13M18 0v6M18 9v10" fill="none" stroke="#111" stroke-width="1.400"/><rect x="16.500" y="6" width="3" height="3" fill="#111"/></svg>
<svg class="i" style="left:449px;top:920px" width="30" height="30" viewBox="0 0 30 30"><circle cx="15" cy="15" r="15" fill="#1c85d8"/><path d="M2 8C7 0 20-2 27 5c4 5 3 12-2 14-4 1-8 0-7-3 1-3-1-6-5-6S5 12 2 17z" fill="#35c1d8"/><path d="M17 1c6 0 12 5 12 12 0 4-3 7-6 7-3 0-6-2-5-4 3 0 5-3 3-7z" fill="#56d67c"/><path d="M11 18c0-4 3-7 6-6 0 4 3 8 12 7-2 6-9 11-14 10-3-2-4-6-4-11z" fill="#0f62a8"/><path d="M13 19c0-3 2-4 3-4 0 3 3 5 6 5-3 2-9 3-9-1z" fill="#e3eff8"/></svg>
<svg class="i" style="left:511px;top:922px" width="28" height="26" viewBox="0 0 28 26"><path d="M0 0h11l2 4H0z" fill="#d89a10"/><path d="M0 4h28v22H0z" fill="#f8d866"/><path d="M5 25V14h18v11h-5v-6h-8v6z" fill="#2e82c8"/></svg>
<svg class="i" style="left:573px;top:922px" width="30" height="28" viewBox="0 0 30 28"><path d="M0 9L15 0l15 9z" fill="#0a5ca8"/><rect y="9" width="30" height="19" fill="#1a9ae0"/><path d="M0 9h30L15 18z" fill="#f5f5f5"/><path d="M0 28V9l15 9 15-9v19z" fill="#3ab4ee" opacity=".7"/></svg>
<div class="b" style="left:636px;top:921px;width:28px;height:28px;border-radius:50%;background:conic-gradient(from -30deg,#e4483a 0 120deg,#f7c83c 120deg 240deg,#31a354 240deg 360deg)"></div>
<div class="b" style="left:643px;top:928px;width:14px;height:14px;border-radius:50%;background:#4a8cf0;border:2px solid #fff;box-sizing:border-box"></div>
<svg class="i" style="left:697px;top:922px" width="32" height="26" viewBox="0 0 32 26"><ellipse cx="11" cy="10" rx="11" ry="9.500" fill="#2bd04f"/><path d="M5 16l-1 5 6-3z" fill="#2bd04f"/><circle cx="7" cy="8" r="1.300" fill="#124"/><circle cx="14" cy="8" r="1.300" fill="#124"/><ellipse cx="23" cy="18" rx="9" ry="8" fill="#f0f0f0"/><circle cx="20" cy="16.500" r="1" fill="#888"/><circle cx="26" cy="16.500" r="1" fill="#888"/></svg>
<div class="b" style="left:760px;top:921px;width:28px;height:28px;border-radius:50%;background:#4a8df0"></div>
<svg class="i" style="left:768px;top:926px" width="14" height="18"><path d="M2 1h4v11h7v4H2z" fill="#fff"/></svg>
<div class="b" style="left:821px;top:921px;width:29px;height:29px;border-radius:50%;background:#f47a3a;border:1px solid #f9d6c5;box-sizing:border-box"></div>
<svg class="i" style="left:827px;top:926px" width="18" height="20"><path d="M14 1l3 3L5 16l-3 1 1-3z" fill="#fff"/></svg>
<svg class="i" style="left:883px;top:922px" width="30" height="28" viewBox="0 0 30 28"><path d="M0 19l15-9 15 9-14 9z" fill="#5a82c8"/><circle cx="9" cy="14" r="5.500" fill="#d83030"/><path d="M15 14L18 1l4 13z" fill="#8ebc70"/><rect x="19" y="4" width="6" height="15" fill="#e8cc40"/></svg>
<svg class="i" style="left:946px;top:921px" width="29" height="28" viewBox="0 0 29 28"><ellipse cx="15" cy="19" rx="12" ry="9" fill="#41a002"/><path d="M2 10C3 4 8 1 13 0c1 4-1 8-7 10zM24 2c4 3 4 8 2 11-3-2-4-6-2-11z" fill="#41a002"/></svg>
<svg class="i" style="left:1007px;top:921px" width="28" height="28" viewBox="0 0 28 28"><path d="M7 5l18-5 3 20-7 7H2z" fill="#9ac4d8"/><path d="M9 3l18-3v4l-17 3z" fill="#dfe8ec"/><path d="M21 27l6-20 1 19z" fill="#8a7a50"/></svg>
<svg class="i" style="left:1069px;top:921px" width="30" height="28" viewBox="0 0 30 28"><path d="M6 0h20l4 4-2 23H6L0 20l4-8z" fill="#d4307c"/><path d="M12 1l15 3 3 1-2 22-10-2z" fill="#5660d8"/><path d="M0 15l5-6 2 13z" fill="#f49725"/><rect x="5" y="5" width="20" height="20" fill="#111"/><text x="7" y="15" font-size="10" font-weight="bold" font-family="Liberation Sans" fill="#fff">IJ</text><rect x="7" y="19" width="8" height="1.800" fill="#fff"/></svg>
<div class="b" style="left:1132px;top:924px;width:27px;height:21px;background:#000;border:1px solid #999;box-sizing:border-box"></div>
<div class="b" style="left:1132px;top:924px;width:27px;height:3px;background:#777"></div>
<div class="t" style="left:1136px;top:930px;font-size:6px;color:#ccc;font-family:'DejaVu Sans Mono'">C:\_</div>
<div class="b" style="left:1194px;top:921px;width:28px;height:28px;background:#e6f5fb;border:2px solid #3a9cc0;box-sizing:border-box"></div>
<svg class="i" style="left:1198px;top:924px" width="22" height="18" viewBox="0 0 22 18"><path d="M1 1c6 1 7 6 10 10s6 3 9 6" fill="none" stroke="#55a8c8" stroke-width="1.500"/></svg>
<div class="t" style="left:1199px;top:945px;font-size:6px;color:#3a7c99;font-weight:bold">installer</div>

<div class="tb" style="left:501px;width:51px"></div><div class="tb" style="left:563px;width:51px"></div><div class="tb" style="left:625px;width:51px"></div><div class="tb" style="left:687px;width:51px"></div><div class="tb" style="left:749px;width:51px"></div><div class="tb" style="left:811px;width:51px"></div><div class="tb" style="left:873px;width:51px"></div><div class="tb" style="left:935px;width:51px"></div><div class="tb" style="left:997px;width:51px"></div><div class="tb" style="left:1054px;width:61px"></div><div class="tb" style="left:1121px;width:51px"></div><div class="tb" style="left:1183px;width:51px"></div>

<div class="b" style="left:1339px;top:925px;width:41px;height:24px;background:#f5f5f5;border:1px solid #999;border-radius:2px;box-sizing:border-box"></div>
<div class="b" style="left:1342px;top:928px;width:33px;height:18px;background:#1f9d55"></div>
<div class="b" style="left:1375px;top:928px;width:3px;height:18px;background:#888"></div>
<div class="b" style="left:1380px;top:931px;width:3px;height:12px;background:#f5f5f5;border:1px solid #999;box-sizing:border-box"></div>
<div class="t" style="left:1347px;top:936px;font-size:13.500px;color:#fff">93%</div>
<svg class="i" style="left:1390px;top:930px" width="17" height="10"><path d="M1 9l7.500-8L16 9" fill="none" stroke="#222" stroke-width="1.200"/></svg>
<div class="b" style="left:1419px;top:930px;width:18px;height:11px;border:2px solid #111;box-sizing:border-box;background:#111"></div><div class="b" style="left:1437px;top:933px;width:2px;height:5px;background:#111"></div>
<svg class="i" style="left:1451px;top:928px" width="17" height="17" viewBox="0 0 17 17"><path d="M1 16C1 9 6 2 15 1M5 16c0-5 3-9 9-11M9 16c0-3 2-6 5-7" fill="none" stroke="#555" stroke-width="1.100"/><circle cx="14" cy="15" r="1.400" fill="#222"/></svg>
<svg class="i" style="left:1478px;top:928px" width="20" height="16" viewBox="0 0 20 16"><path d="M1 5h3l5-4v14l-5-4H1zM12 5l6 6m0-6l-6 6" fill="none" stroke="#222" stroke-width="1.100"/></svg>
<div class="t" style="left:1507px;top:936px;font-size:20px;color:#111;font-family:'Noto Sans CJK SC',sans-serif">英</div>
<div class="t" style="left:1557px;top:925px;font-size:16px;color:#111">22:23</div>
<div class="t" style="left:1540px;top:948px;font-size:16.500px;color:#111">2020/12/2</div>
<svg class="i" style="left:1640px;top:925px" width="20" height="22" viewBox="0 0 20 22"><path d="M10 3c-5 0-9 3-9 8s4 7 7 7l2 3 2-3c3 0 7-2 7-7 0-3-1-5-2-6" fill="none" stroke="#666" stroke-width="1.200"/><circle cx="7" cy="11" r="1" fill="#666"/><circle cx="12" cy="11" r="1" fill="#666"/><circle cx="16" cy="3" r="2.500" fill="#e82a2a"/></svg>
<svg class="i" style="left:1689px;top:925px" width="20" height="21" viewBox="0 0 20 21"><path d="M.7.7h18.600v16H12l-2 3-2-3H.7z" fill="none" stroke="#111" stroke-width="1.300"/></svg>
<div class="b" style="left:1735px;top:911px;width:1px;height:50px;background:#c8c8c8"></div>
</body></html>
